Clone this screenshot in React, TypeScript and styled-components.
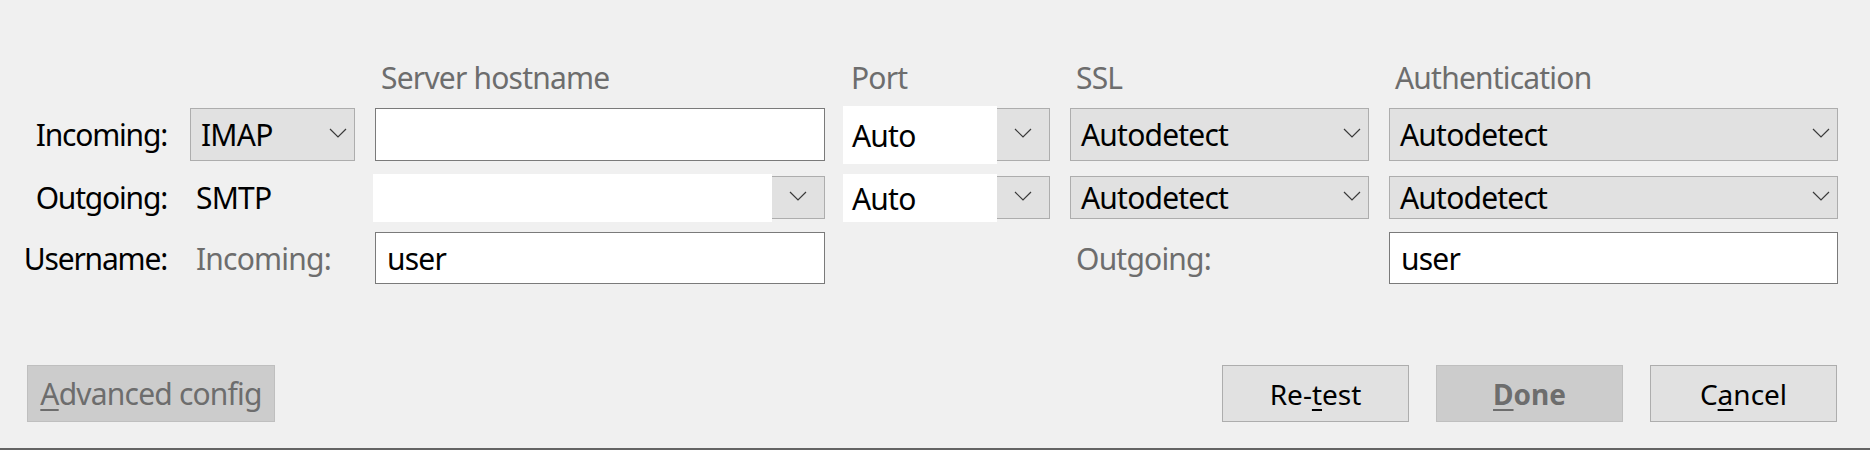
import React from 'react';
import styled, { createGlobalStyle } from 'styled-components';

const GlobalStyle = createGlobalStyle`
  html, body { margin: 0; padding: 0; background: #f0f0f0; }
  body { font-family: "Noto Sans", "Open Sans", sans-serif; }
  * { box-sizing: border-box; }
`;

const COLS = '170px 165px 450px 205px 299px 449px';

const Dialog = styled.div`
  width: 1870px;
  height: 450px;
  background: #f0f0f0;
  border-bottom: 2px solid #646464;
  display: flex;
  flex-direction: column;
  font-size: 30px;
  letter-spacing: -0.8px;
  color: #000;
`;

const Form = styled.div`
  padding-top: 58px;
  display: flex;
  flex-direction: column;
`;

const HeaderRow = styled.div`
  display: grid;
  grid-template-columns: ${COLS};
  column-gap: 20px;
  height: 40px;
  line-height: 40px;
  margin-bottom: 10px;
`;

const FieldRow = styled.div<{ $h: number }>`
  display: grid;
  grid-template-columns: ${COLS};
  column-gap: 20px;
  height: ${(p) => p.$h}px;
  & + & { margin-top: 15px; }
`;

const Head = styled.div`
  padding-left: 6px;
  color: #6d6d6d;
  white-space: nowrap;
`;

const RowLabel = styled.div`
  display: flex;
  align-items: center;
  justify-content: flex-end;
  padding-right: 3px;
  letter-spacing: -1.2px;
  white-space: nowrap;
`;

const Caption = styled.div<{ $muted?: boolean }>`
  display: flex;
  align-items: center;
  padding-left: 6px;
  color: ${(p) => (p.$muted ? '#6d6d6d' : '#000')};
  white-space: nowrap;
`;

const Empty = styled.div``;

const TextField = styled.input`
  width: 100%;
  height: 100%;
  margin: 0;
  background: #fff;
  border: 1px solid #7a7a7a;
  padding: 0 11px;
  font: inherit;
  letter-spacing: inherit;
  color: #000;
  outline: none;
`;

const Select = styled.div`
  display: flex;
  align-items: center;
  justify-content: space-between;
  background: #e1e1e1;
  border: 1px solid #adadad;
  padding: 0 7px 0 10px;
  white-space: nowrap;
`;

const ChevronWrap = styled.span`
  display: flex;
  margin-top: -3px;
`;

const EditCombo = styled.div`
  display: flex;
`;

const EditArea = styled.div`
  flex: 1;
  background: #fff;
  margin: -2px 0 -3px -2px;
  display: flex;
  align-items: center;
  padding-left: 9px;
  white-space: nowrap;
`;

const DropButton = styled.div`
  width: 53px;
  flex: none;
  background: #e1e1e1;
  border: 1px solid #adadad;
  border-left: none;
  display: flex;
  align-items: center;
  justify-content: center;
`;

const Footer = styled.div`
  margin-top: auto;
  display: flex;
  justify-content: space-between;
  padding: 0 33px 26px 27px;
`;

const ButtonGroup = styled.div`
  display: flex;
  gap: 27px;
`;

const Button = styled.button<{ $disabled?: boolean; $w: number; $small?: boolean; $bold?: boolean }>`
  width: ${(p) => p.$w}px;
  height: 57px;
  margin: 0;
  padding: 0;
  background: ${(p) => (p.$disabled ? '#cccccc' : '#e1e1e1')};
  border: 1px solid ${(p) => (p.$disabled ? '#bfbfbf' : '#adadad')};
  color: ${(p) => (p.$disabled ? '#6d6d6d' : '#000')};
  font-family: inherit;
  font-size: ${(p) => (p.$small ? '28px' : '30px')};
  font-weight: ${(p) => (p.$bold ? 700 : 400)};
  letter-spacing: ${(p) => (p.$small ? '0' : '-0.8px')};
  display: flex;
  align-items: center;
  justify-content: center;
  white-space: nowrap;
  cursor: default;
`;

const Key = styled.u`
  text-decoration-thickness: 2px;
  text-underline-offset: 4px;
`;

const Chevron = () => (
  <ChevronWrap>
    <svg width="18" height="10" viewBox="0 0 18 10">
      <polyline points="1,1 9,9 17,1" fill="none" stroke="#3a3a3a" strokeWidth="1.2" />
    </svg>
  </ChevronWrap>
);

export default function App() {
  return (
    <>
      <GlobalStyle />
      <Dialog>
        <Form>
          <HeaderRow>
            <Empty />
            <Empty />
            <Head>Server hostname</Head>
            <Head>Port</Head>
            <Head>SSL</Head>
            <Head>Authentication</Head>
          </HeaderRow>
          <FieldRow $h={53}>
            <RowLabel>Incoming:</RowLabel>
            <Select>
              <span>IMAP</span>
              <Chevron />
            </Select>
            <TextField readOnly defaultValue="" />
            <EditCombo>
              <EditArea>Auto</EditArea>
              <DropButton>
                <Chevron />
              </DropButton>
            </EditCombo>
            <Select>
              <span>Autodetect</span>
              <Chevron />
            </Select>
            <Select>
              <span>Autodetect</span>
              <Chevron />
            </Select>
          </FieldRow>
          <FieldRow $h={41}>
            <RowLabel>Outgoing:</RowLabel>
            <Caption>SMTP</Caption>
            <EditCombo>
              <EditArea />
              <DropButton>
                <Chevron />
              </DropButton>
            </EditCombo>
            <EditCombo>
              <EditArea>Auto</EditArea>
              <DropButton>
                <Chevron />
              </DropButton>
            </EditCombo>
            <Select>
              <span>Autodetect</span>
              <Chevron />
            </Select>
            <Select>
              <span>Autodetect</span>
              <Chevron />
            </Select>
          </FieldRow>
          <FieldRow $h={52}>
            <RowLabel>Username:</RowLabel>
            <Caption $muted>Incoming:</Caption>
            <TextField readOnly defaultValue="user" />
            <Empty />
            <Caption $muted>Outgoing:</Caption>
            <TextField readOnly defaultValue="user" />
          </FieldRow>
        </Form>
        <Footer>
          <Button $disabled $w={248}>
            <span>
              <Key>A</Key>dvanced config
            </span>
          </Button>
          <ButtonGroup>
            <Button $w={187} $small>
              <span>
                Re-<Key>t</Key>est
              </span>
            </Button>
            <Button $disabled $w={187} $small $bold>
              <span>
                <Key>D</Key>one
              </span>
            </Button>
            <Button $w={187} $small>
              <span>
                C<Key>a</Key>ncel
              </span>
            </Button>
          </ButtonGroup>
        </Footer>
      </Dialog>
    </>
  );
}
